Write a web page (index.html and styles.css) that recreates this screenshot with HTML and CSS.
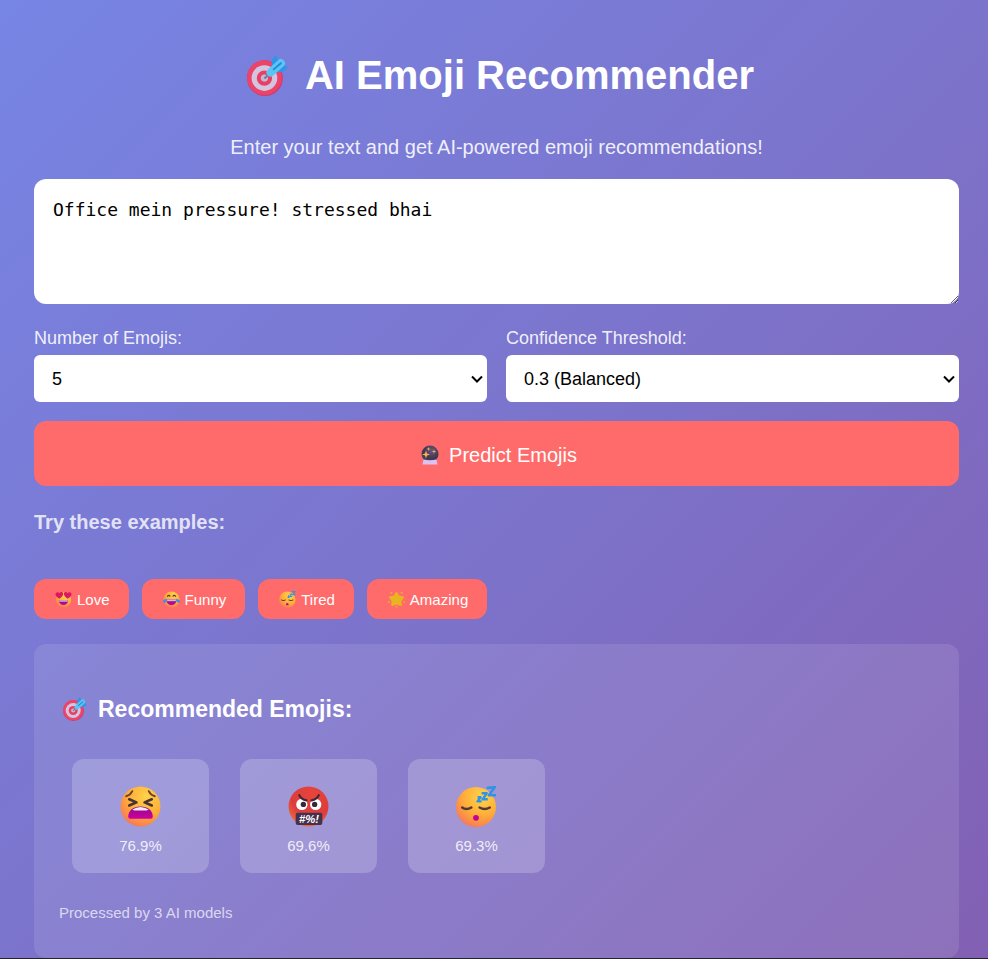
FILE: index.html
```html
<!DOCTYPE html>
<html lang="en">
<head>
<meta charset="utf-8">
<meta name="viewport" content="width=device-width, initial-scale=1">
<title>AI Emoji Recommender</title>
<link rel="stylesheet" href="styles.css">
</head>
<body>
<svg class="sprite" aria-hidden="true">
  <defs>
    <radialGradient id="face" cx=".65" cy=".25" r=".85"><stop offset="0" stop-color="#ffd34a"/><stop offset=".55" stop-color="#ffad38"/><stop offset="1" stop-color="#f5705c"/></radialGradient>
    <radialGradient id="rage" cx=".6" cy=".2" r=".9"><stop offset="0" stop-color="#e8443a"/><stop offset=".6" stop-color="#dc3d3d"/><stop offset="1" stop-color="#f07a3c"/></radialGradient>
    <radialGradient id="orb" cx=".6" cy=".3" r=".8"><stop offset="0" stop-color="#6c5580"/><stop offset=".6" stop-color="#40364f"/><stop offset="1" stop-color="#54486c"/></radialGradient>
    <linearGradient id="mouth" x1="0" y1="0" x2="0" y2="1"><stop offset="0" stop-color="#8e0a8a"/><stop offset="1" stop-color="#cf00a0"/></linearGradient>
    <symbol id="target" viewBox="0 0 40 40">
      <circle cx="17.500" cy="22.500" r="17.500" fill="#cf3a6c"/>
      <circle cx="17" cy="22" r="17" fill="#ec4469"/>
      <circle cx="17" cy="22.500" r="12.500" fill="#d3c5e0"/>
      <circle cx="17" cy="22.500" r="7.500" fill="#ea3f65"/>
      <circle cx="17" cy="22.500" r="3.500" fill="#c5b8d4"/>
      <path d="M17 23 22 18" stroke="#777c94" stroke-width="2"/>
      <path d="M24 13 24 5 28 0 31 6 31 10ZM28 14 34 9 40 12 36 16 28 17Z" fill="#2f95e8"/>
      <path d="M23 17 33 8" stroke="#5ac4f4" stroke-width="8" stroke-linecap="round"/>
      <path d="M26 14 33 8" stroke="#2389d4" stroke-width="1.800" stroke-linecap="round"/>
    </symbol>
    <symbol id="crystal" viewBox="0 0 40 40">
      <circle cx="20" cy="18" r="17" fill="url(#orb)"/>
      <path d="M7 29Q20 32 33 29L35 39H5Z" fill="#dcc2f2"/>
      <path d="M12 11 14 17 20 19 14 21 12 27 10 21 4 19 10 17ZM28 8 29 12 33 13 29 14 28 18 27 14 23 13 27 12ZM17 4 18 7 21 8 18 9 17 12 16 9 13 8 16 7Z" fill="#f6b64d"/>
    </symbol>
    <symbol id="love" viewBox="0 0 40 40">
      <circle cx="20" cy="21" r="18" fill="url(#face)"/>
      <path d="M10 18C3 14-1 9 2 5 5 2 9 3 10 6 12 2 17 1 19 5 20 10 15 15 10 18ZM30 18C25 15 20 10 21 5 23 1 28 2 30 6 31 3 35 2 38 5 41 9 37 14 30 18Z" fill="#db1761"/>
      <path d="M9 22H31C30 30 26 33 20 33S10 30 9 22Z" fill="url(#mouth)"/><path d="M10 22H30V25H10Z" fill="#d8d2ee"/>
    </symbol>
    <symbol id="funny" viewBox="0 0 40 40">
      <circle cx="20" cy="20" r="19" fill="url(#face)"/>
      <path d="M10 13Q14 8 17 13M23 13Q26 8 30 13" fill="none" stroke="#583a38" stroke-width="3"/>
      <path d="M8 20H32C31 30 26 33 20 33S9 30 8 20Z" fill="url(#mouth)"/><path d="M9 20H31L30 24H10Z" fill="#c7bddc"/>
      <path d="M8 18Q-1 20 0 25 2 30 7 26 10 22 8 18ZM32 18Q41 20 40 25 38 30 33 26 30 22 32 18Z" fill="#3e8def"/>
    </symbol>
    <symbol id="sleep" viewBox="0 0 40 40">
      <circle cx="19.500" cy="20.500" r="19.500" fill="url(#face)"/>
      <path d="M6 21Q10 24 15 21M23 21Q28 24 33 21" fill="none" stroke="#4f383a" stroke-width="2.400" stroke-linecap="round"/>
      <circle cx="19.500" cy="31" r="2.800" fill="#c50095"/>
      <path d="M30 2 38 1 32 9 39 9M25 7 30 7 26 13 31 13M21 11H24L21 15H25" fill="none" stroke="#2f93e8" stroke-width="2.400" stroke-linejoin="round"/>
    </symbol>
    <symbol id="star" viewBox="0 0 40 40">
      <path d="M20 5 25 13 35 15 29 23 30 33 20 29 10 33 11 23 5 15 15 13Z" fill="#e8b420" stroke="#e8b420" stroke-width="5" stroke-linejoin="round"/>
      <g fill="#eda63b"><circle cx="8" cy="4" r="2.500"/><circle cx="32" cy="4" r="2.500"/><circle cx="2" cy="26" r="2.500"/><circle cx="38" cy="26" r="2.500"/><circle cx="20" cy="37" r="2.500"/></g>
    </symbol>
    <symbol id="tired" viewBox="0 0 40 40">
      <circle cx="20" cy="20" r="19.500" fill="url(#face)"/>
      <path d="M6 10Q10 9 12 5M28 5Q30 9 34 10" fill="none" stroke="#6b4038" stroke-width="1.800" stroke-linecap="round"/>
      <path d="M9 13 16 16 9 19M31 13 24 16 31 19" fill="none" stroke="#493334" stroke-width="2.600" stroke-linecap="round" stroke-linejoin="round"/>
      <path d="M8 30C8 24 13 20 20 20S32 24 32 30Q32 32 30 32H10Q8 32 8 30Z" fill="url(#mouth)"/>
      <path d="M12 23Q20 18 28 23L26 24H14Z" fill="#eee9f6"/>
    </symbol>
    <symbol id="curse" viewBox="0 0 40 40">
      <circle cx="20" cy="20" r="19.500" fill="url(#rage)"/>
      <circle cx="13.500" cy="18" r="5.500" fill="#fff"/><circle cx="27" cy="18" r="5.500" fill="#fff"/>
      <circle cx="15" cy="18" r="2.600" fill="#35293a"/><circle cx="26" cy="18" r="2.600" fill="#35293a"/>
      <path d="M11 9Q13 13 18 14M23 14Q28 13 30 9" fill="none" stroke="#40293a" stroke-width="2.200" stroke-linecap="round"/>
      <rect x="7.500" y="26" width="26" height="12" rx="2" fill="#45304e"/>
      <text x="20.500" y="36" class="curse-text" text-anchor="middle">#%!</text>
    </symbol>
    <symbol id="chevron" viewBox="0 0 12 8">
      <path d="M1 1.500 6 6.500 11 1.500" fill="none" stroke="#000" stroke-width="2"/>
    </symbol>
  </defs>
</svg>
<main class="page">
  <h1 class="title"><svg class="icon-title" aria-hidden="true"><use href="#target"/></svg>AI Emoji Recommender</h1>
  <p class="subtitle">Enter your text and get AI-powered emoji recommendations!</p>
  <form class="form">
    <textarea class="message" aria-label="Your text">Office mein pressure! stressed bhai</textarea>
    <div class="controls">
      <div class="field">
        <label for="count">Number of Emojis:</label>
        <div class="select-box">
          <select id="count"><option>3</option><option selected>5</option><option>7</option></select>
          <svg class="icon-chevron" aria-hidden="true"><use href="#chevron"/></svg>
        </div>
      </div>
      <div class="field">
        <label for="threshold">Confidence Threshold:</label>
        <div class="select-box">
          <select id="threshold"><option selected>0.3 (Balanced)</option></select>
          <svg class="icon-chevron" aria-hidden="true"><use href="#chevron"/></svg>
        </div>
      </div>
    </div>
    <button type="button" class="predict"><svg class="icon-predict" aria-hidden="true"><use href="#crystal"/></svg>Predict Emojis</button>
  </form>
  <h2 class="examples-title">Try these examples:</h2>
  <div class="examples">
    <button type="button" class="chip"><svg class="icon-chip" aria-hidden="true"><use href="#love"/></svg>Love</button>
    <button type="button" class="chip"><svg class="icon-chip" aria-hidden="true"><use href="#funny"/></svg>Funny</button>
    <button type="button" class="chip"><svg class="icon-chip" aria-hidden="true"><use href="#sleep"/></svg>Tired</button>
    <button type="button" class="chip"><svg class="icon-chip" aria-hidden="true"><use href="#star"/></svg>Amazing</button>
  </div>
  <section class="results">
    <h2 class="results-title"><svg class="icon-results" aria-hidden="true"><use href="#target"/></svg>Recommended Emojis:</h2>
    <div class="cards">
      <div class="card"><svg class="icon-card" aria-hidden="true"><use href="#tired"/></svg><span>76.9%</span></div>
      <div class="card"><svg class="icon-card" aria-hidden="true"><use href="#curse"/></svg><span>69.6%</span></div>
      <div class="card"><svg class="icon-card" aria-hidden="true"><use href="#sleep"/></svg><span>69.3%</span></div>
    </div>
    <p class="note">Processed by 3 AI models</p>
  </section>
</main>
</body>
</html>
```
FILE: styles.css
```css
* { box-sizing: border-box; }

body {
  margin: 0;
  min-height: 100vh;
  display: flex;
  font-family: "Liberation Sans", Arial, sans-serif;
  color: #fff;
  background: linear-gradient(135deg, #7785e4 0%, #7c74cc 50%, #8260b3 100%);
  border-bottom: 1px solid #25232b;
}

.sprite { position: absolute; width: 0; height: 0; }
.curse-text { font: italic bold 11px "Liberation Sans", sans-serif; fill: #fff; }

.page {
  flex: 1;
  display: flex;
  flex-direction: column;
  padding: 50px 29px 0 34px;
}

h1, h2, p { margin: 0; }

.title {
  display: flex;
  align-items: center;
  justify-content: center;
  gap: 17px;
  padding-left: 8px;
  font-size: 40px;
  line-height: 50px;
}

.subtitle {
  margin-top: 34px;
  text-align: center;
  font-size: 20px;
  line-height: 26px;
  color: rgba(255, 255, 255, .9);
}

.form { display: flex; flex-direction: column; margin-top: 19px; }

.message {
  display: block;
  width: 100%;
  height: 125px;
  padding: 19px;
  border: 0;
  border-radius: 12px;
  background: #fff;
  color: #000;
  font-family: Consolas, "DejaVu Sans Mono", monospace;
  font-size: 18px;
  line-height: 24px;
  resize: vertical;
}

.controls { display: grid; grid-template-columns: 1fr 1fr; gap: 19px; margin-top: 23px; }
.field { display: flex; flex-direction: column; gap: 6px; }
.field label { font-size: 18px; line-height: 22px; color: rgba(255, 255, 255, .9); }

.select-box { position: relative; }

.select-box select {
  appearance: none;
  display: block;
  width: 100%;
  height: 47px;
  padding: 0 18px;
  border: 0;
  border-radius: 6px;
  background: #fff;
  color: #000;
  font-family: inherit;
  font-size: 18px;
}

.icon-chevron {
  position: absolute;
  right: 4px;
  top: 20px;
  width: 12px;
  height: 8px;
  pointer-events: none;
}

button { border: 0; font-family: inherit; color: #fff; background: #ff6b6b; cursor: pointer; }

.predict {
  display: flex;
  align-items: center;
  justify-content: center;
  gap: 9px;
  height: 65px;
  margin-top: 19px;
  padding: 3px 0 0 4px;
  border-radius: 12px;
  font-size: 20px;
}

.examples-title {
  margin-top: 23px;
  font-size: 20px;
  line-height: 26px;
  color: rgba(255, 255, 255, .8);
}

.examples { display: flex; flex-wrap: wrap; gap: 13px; margin-top: 44px; }

.chip {
  display: flex;
  align-items: center;
  gap: 5px;
  height: 40px;
  padding: 1px 19px 0 21px;
  border-radius: 12px;
  font-size: 15px;
}

.results {
  flex: 1;
  margin-top: 25px;
  padding: 50px 25px 34px;
  border-radius: 12px;
  background: rgba(255, 255, 255, .1);
}

.results-title {
  display: flex;
  align-items: center;
  gap: 11px;
  padding-left: 4px;
  font-size: 23px;
  line-height: 30px;
}

.cards { display: flex; flex-wrap: wrap; gap: 31px; margin-top: 35px; padding-left: 13px; }

.card {
  display: flex;
  flex-direction: column;
  align-items: center;
  gap: 9px;
  width: 137px;
  height: 114px;
  padding-top: 27px;
  border-radius: 12px;
  background: rgba(255, 255, 255, .2);
  font-size: 15px;
  line-height: 20px;
  color: rgba(255, 255, 255, .85);
}

.note { margin-top: 30px; font-size: 15px; line-height: 20px; color: rgba(255, 255, 255, .7); }

.icon-title { width: 41px; height: 41px; }
.icon-predict { width: 20px; height: 20px; }
.icon-chip { width: 17px; height: 17px; }
.icon-results { width: 24px; height: 24px; }
.icon-card { width: 41px; height: 41px; }
```
